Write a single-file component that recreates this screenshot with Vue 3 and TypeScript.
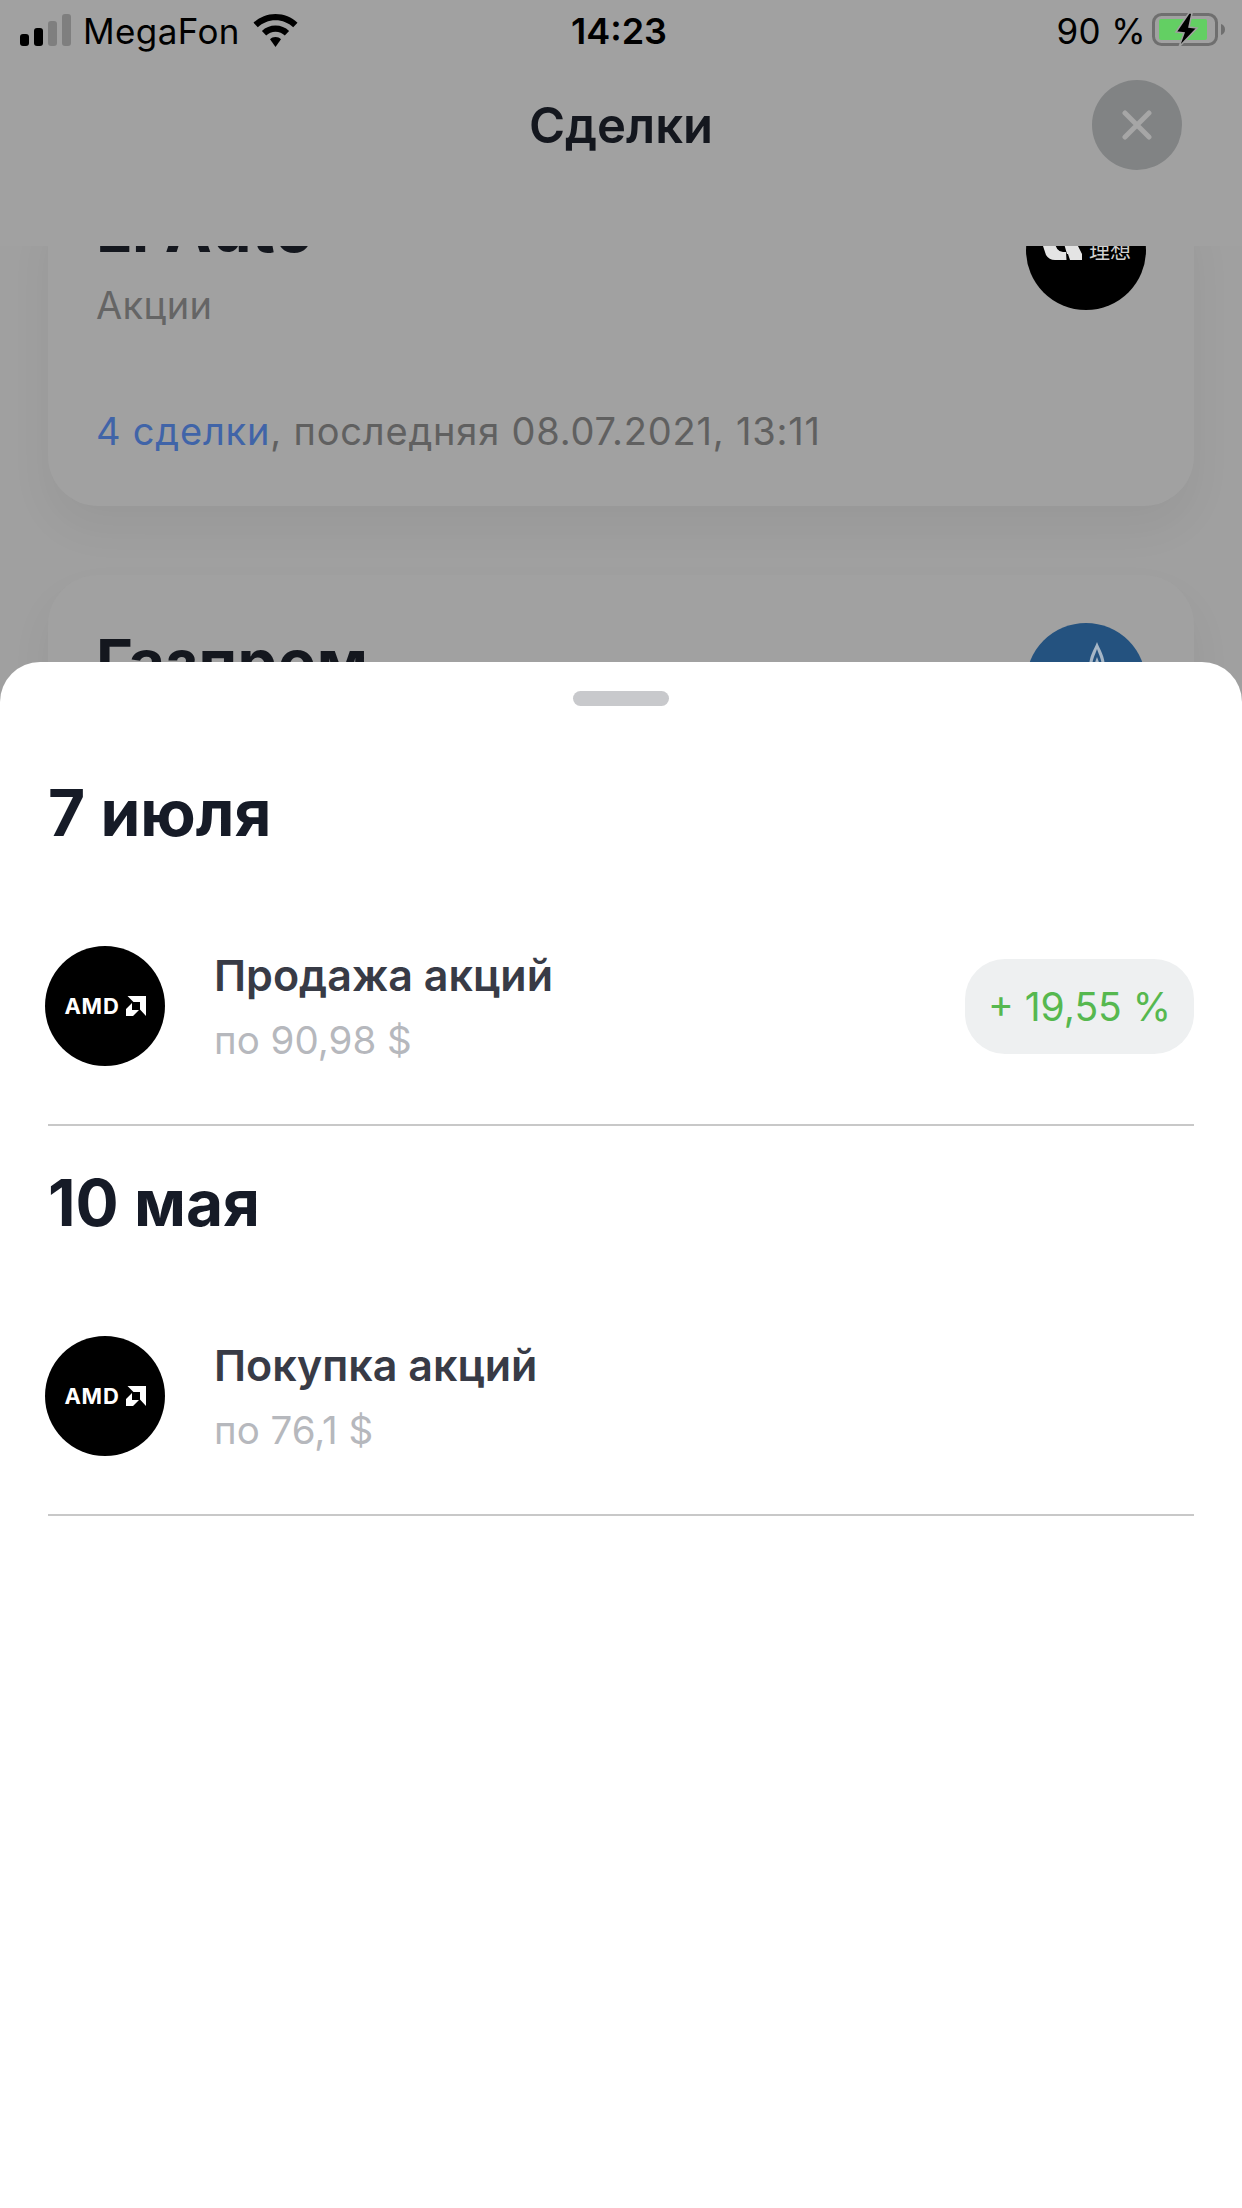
<script setup lang="ts">
interface Trade {
  title: string
  price: string
  gain?: string
}

interface TradeDay {
  date: string
  trades: Trade[]
}

const days: TradeDay[] = [
  { date: '7 июля', trades: [{ title: 'Продажа акций', price: 'по 90,98 $', gain: '+ 19,55 %' }] },
  { date: '10 мая', trades: [{ title: 'Покупка акций', price: 'по 76,1 $' }] },
]
</script>

<template>
  <div class="screen">
    <header class="top">
      <div class="status">
        <div class="status-left">
          <div class="signal">
            <i class="bar on b1"></i>
            <i class="bar on b2"></i>
            <i class="bar b3"></i>
            <i class="bar b4"></i>
          </div>
          <span class="carrier">MegaFon</span>
          <svg class="wifi" viewBox="0 0 45 33">
            <path d="M22.500 0C14 0 6.300 3.300 0.500 8.700L4.800 13.300C9.400 9 15.600 6.300 22.500 6.300S35.600 9 40.200 13.300L44.500 8.700C38.700 3.300 31 0 22.500 0Z" />
            <path d="M22.500 11.500C17.300 11.500 12.500 13.500 8.900 16.900L13.200 21.500C15.600 19.200 18.900 17.800 22.500 17.800S29.400 19.200 31.800 21.500L36.100 16.900C32.500 13.500 27.700 11.500 22.500 11.500Z" />
            <path d="M22.500 23C20 23 18.600 23.800 17 25.300L22.500 33L28 25.300C26.400 23.800 25 23 22.500 23Z" />
          </svg>
        </div>
        <span class="time">14:23</span>
        <div class="status-right">
          <span class="percent">90 %</span>
          <svg class="battery" viewBox="0 0 74 36">
            <rect x="1.500" y="2.500" width="63" height="30" rx="8" fill="none" stroke="#6f6f6f" stroke-width="3" />
            <rect x="7" y="7" width="48" height="21" rx="2" fill="#63cf63" />
            <path d="M69 12C71.500 12.800 73 14.800 73 17.500S71.500 22.200 69 23Z" fill="#6f6f6f" />
            <path d="M37 1L24 20L32 21L27 35L45 16L37 15L40 1Z" fill="#000" stroke="#a1a1a1" stroke-width="1.500" />
          </svg>
        </div>
      </div>
      <div class="nav">
        <h1 class="nav-title">Сделки</h1>
        <button class="close">
          <svg viewBox="0 0 30 30" class="close-icon">
            <path d="M3 3L27 27M27 3L3 27" />
          </svg>
        </button>
      </div>
    </header>

    <div class="list">
      <article class="card card-first">
        <div class="card-head">
          <div>
            <div class="card-name">Li Auto</div>
            <div class="card-kind">Акции</div>
          </div>
          <div class="logo logo-li">
            <svg class="li-mark" viewBox="0 0 42 30">
              <path d="M0 10H13Q15 22 22 22H25L25.500 30H14Q8 30 5 25Z" fill="#e4e4e4" />
              <path d="M22 10H34L41 24V30H29L27 24H26Z" fill="#e4e4e4" />
            </svg>
            <span class="li-text">理想</span>
          </div>
        </div>
        <div class="card-foot"><span class="link">4 сделки</span>, последняя 08.07.2021, 13:11</div>
      </article>
      <article class="card">
        <div class="card-head">
          <div class="card-name">Газпром</div>
          <div class="logo logo-gaz">
            <svg class="flame" viewBox="0 0 30 70">
              <path d="M15 0C18 8 23 14 23 26C23 44 19 60 15 70C11 60 7 44 7 26C7 14 12 8 15 0Z" fill="#a6b6c6" />
              <path d="M15 7C17 13 20 18 20 26C20 40 17 52 15 60C13 52 10 40 10 26C10 18 13 13 15 7Z" fill="#24527f" />
              <path d="M15 15C17 20 18 23 18 28H12C12 23 13 20 15 15Z" fill="#a6b6c6" />
            </svg>
          </div>
        </div>
      </article>
    </div>

    <section class="sheet">
      <div class="handle"></div>
      <div v-for="day in days" :key="day.date" class="day">
        <h2 class="day-date">{{ day.date }}</h2>
        <div v-for="trade in day.trades" :key="trade.title" class="trade">
          <div class="amd">
            <span class="amd-text">AMD</span>
            <svg class="amd-arrow" viewBox="0 0 20 20">
              <path d="M1.500 0H20V20L14 13.500V6H7.500Z" fill="#fff" />
              <path d="M0 20V13L6 7V14H13L7 20Z" fill="#fff" />
            </svg>
          </div>
          <div class="trade-body">
            <div class="trade-title">{{ trade.title }}</div>
            <div class="trade-price">{{ trade.price }}</div>
          </div>
          <div v-if="trade.gain" class="gain">{{ trade.gain }}</div>
        </div>
      </div>
    </section>
  </div>
</template>

<style scoped>
.screen {
  position: relative;
  width: 1242px;
  height: 2208px;
  overflow: hidden;
  background: #a0a0a0;
  font-family: Inter, "Noto Sans", sans-serif;
}

.top {
  position: relative;
  z-index: 2;
  height: 246px;
  background: #a1a1a1;
}

.status {
  display: flex;
  align-items: center;
  justify-content: space-between;
  height: 60px;
  padding: 0 16px 0 20px;
  color: #000;
  position: relative;
}

.status-left,
.status-right {
  display: flex;
  align-items: center;
}

.signal {
  display: flex;
  align-items: flex-end;
  gap: 5px;
  height: 32px;
  margin-right: 12px;
}

.bar {
  display: block;
  width: 9px;
  border-radius: 3px;
  background: #7f7f7f;
}

.bar.on {
  background: #000;
}

.b1 { height: 12px; }
.b2 { height: 18px; }
.b3 { height: 25px; }
.b4 { height: 32px; }

.carrier,
.percent,
.time {
  padding-top: 2px;
}

.carrier,
.percent {
  font-size: 35px;
  letter-spacing: 0.4px;
}

.wifi {
  width: 45px;
  height: 33px;
  margin-left: 13px;
  fill: #000;
}

.time {
  position: absolute;
  left: 571px;
  font-size: 36px;
  font-weight: 600;
}

.battery {
  width: 74px;
  height: 36px;
  margin-left: 6px;
}

.nav {
  position: relative;
  display: flex;
  justify-content: center;
  align-items: center;
  height: 90px;
  margin-top: 20px;
}

.nav-title {
  margin: 0;
  font-size: 49px;
  font-weight: 600;
  color: #14171e;
}

.close {
  position: absolute;
  right: 60px;
  top: 0;
  width: 90px;
  height: 90px;
  padding: 0;
  border: 0;
  border-radius: 50%;
  background: #818384;
  display: flex;
  align-items: center;
  justify-content: center;
}

.close-icon {
  width: 30px;
  height: 30px;
}

.close-icon path {
  fill: none;
  stroke: #a6a6a6;
  stroke-width: 5;
  stroke-linecap: round;
}

.list {
  display: flex;
  flex-direction: column;
  gap: 69px;
  padding: 0 48px;
  margin-top: -56px;
}

.card {
  background: #a1a1a1;
  border-radius: 50px;
  padding: 0 48px;
  box-shadow: 0 22px 44px rgba(0, 0, 0, 0.05);
}

.card-first {
  height: 316px;
}

.card-head {
  display: flex;
  justify-content: space-between;
  padding-top: 48px;
}

.card-first .card-head {
  padding-top: 0;
}

.card-name {
  padding-top: 4px;
  font-size: 63px;
  line-height: 70px;
  font-weight: 700;
  letter-spacing: 0.4px;
  color: #14171e;
}

.card-kind {
  margin-top: 18px;
  font-size: 38px;
  letter-spacing: 0.4px;
  color: #656565;
}

.logo {
  position: relative;
  width: 120px;
  height: 120px;
  border-radius: 50%;
  flex-shrink: 0;
  display: flex;
  align-items: center;
  justify-content: center;
  box-sizing: border-box;
}

.logo-li {
  background: #000;
  align-items: flex-end;
  gap: 6px;
  padding-bottom: 50px;
}

.li-mark {
  width: 42px;
  height: 30px;
}

.li-text {
  color: #d0d0d0;
  font-family: "Noto Sans CJK SC", sans-serif;
  font-size: 21px;
  line-height: 26px;
  margin-bottom: -2px;
}

.logo-gaz {
  background: #24527f;
  align-items: flex-start;
  padding: 19px 0 0 22px;
}

.flame {
  width: 30px;
  height: 70px;
}

.card-foot {
  margin-top: 80px;
  font-size: 38px;
  letter-spacing: 0.8px;
  color: #606060;
}

.link {
  color: #4064a8;
}

.sheet {
  position: absolute;
  z-index: 3;
  left: 0;
  right: 0;
  top: 662px;
  bottom: 0;
  padding: 29px 48px 0;
  background: #fff;
  border-radius: 40px 40px 0 0;
}

.handle {
  width: 96px;
  height: 15px;
  margin: 0 auto 30px;
  border-radius: 8px;
  background: #c8c9cc;
}

.day-date {
  margin: 0;
  padding-top: 38px;
  font-size: 64px;
  line-height: 78px;
  font-weight: 700;
  color: #161b27;
}

.trade {
  display: flex;
  align-items: center;
  margin-top: 94px;
  padding-bottom: 58px;
  border-bottom: 2px solid #c8c8c8;
}

.amd {
  width: 120px;
  height: 120px;
  margin-left: -3px;
  border-radius: 50%;
  background: #000;
  display: flex;
  align-items: center;
  justify-content: center;
  gap: 6px;
  flex-shrink: 0;
}

.amd-text {
  color: #fff;
  font-size: 22px;
  font-weight: 700;
  letter-spacing: 0.8px;
}

.amd-arrow {
  width: 20px;
  height: 20px;
}

.trade-body {
  flex: 1;
  margin-left: 49px;
  padding-bottom: 1px;
}

.trade-title {
  font-size: 43px;
  font-weight: 600;
  color: #383b46;
}

.trade-price {
  margin-top: 16px;
  font-size: 38.500px;
  color: #b6b8bd;
}

.gain {
  width: 229px;
  height: 95px;
  border-radius: 40px;
  background: #eef0f1;
  color: #56b84f;
  font-size: 39px;
  display: flex;
  align-items: center;
  justify-content: center;
}
</style>
